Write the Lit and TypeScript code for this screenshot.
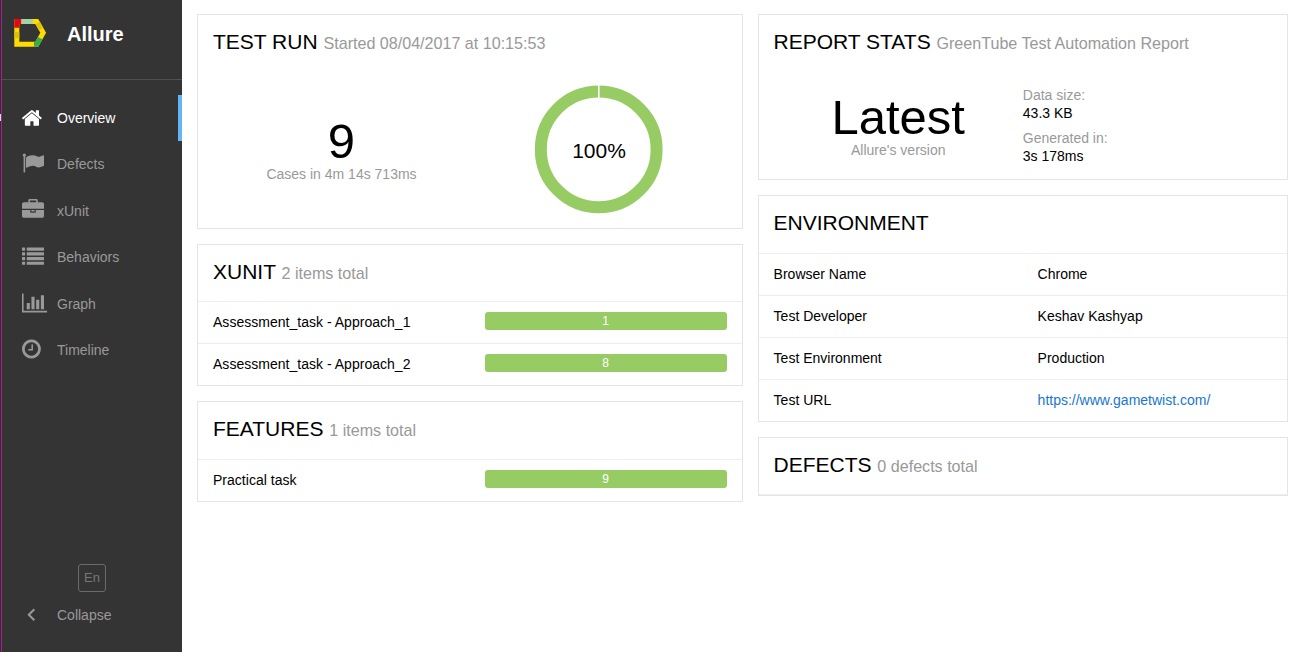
import { LitElement, html, svg, css } from "lit";
import { customElement } from "lit/decorators.js";

const icons: Record<string, { width: number; x: number; path: string }> = {
  home: { width: 1664, x: 88, path: "M1472 992v480q0 26-19 45t-45 19h-384v-384h-256v384h-384q-26 0-45-19t-19-45v-480q0-1 .5-3t.5-3l575-474 575 474q1 2 1 6zm223-69l-62 74q-8 9-21 11h-3q-13 0-21-7l-692-577-692 577q-12 8-24 7-13-2-21-11l-62-74q-8-10-7-23.5t11-21.5l719-599q32-26 76-26t76 26l244 204v-195q0-14 9-23t23-9h192q14 0 23 9t9 23v408l219 182q10 8 11 21.5t-7 23.5z" },
  flag: { width: 1792, x: 0, path: "M320 256q0 72-64 110v1266q0 13-9.5 22.5t-22.5 9.5h-64q-13 0-22.5-9.5t-9.5-22.5v-1266q-64-38-64-110 0-53 37.5-90.5t90.5-37.5 90.5 37.5 37.5 90.5zm1472 64v763q0 25-12.5 38.5t-39.5 27.5q-215 116-369 116-61 0-123.5-22t-108.5-48-115.5-48-142.5-22q-192 0-464 146-17 9-33 9-26 0-45-19t-19-45v-742q0-32 31-55 21-14 79-43 236-120 421-120 107 0 200 29t219 88q38 19 88 19 54 0 117.5-21t110-47 88-47 54.5-21q26 0 45 19t19 45z" },
  briefcase: { width: 1792, x: 0, path: "M640 256h512v-128h-512v128zm1152 640v480q0 66-47 113t-113 47h-1472q-66 0-113-47t-47-113v-480h672v160q0 26 19 45t45 19h320q26 0 45-19t19-45v-160h672zm-768 0v128h-256v-128h256zm768-480v384h-1792v-384q0-66 47-113t113-47h352v-160q0-40 28-68t68-28h576q40 0 68 28t28 68v160h352q66 0 113 47t47 113z" },
  list: { width: 1792, x: 0, path: [128, 512, 896, 1280].map((y) => `M32 ${y}h192q32 0 32 32v192q0 32-32 32h-192q-32 0-32-32v-192q0-32 32-32zM416 ${y}h1344q32 0 32 32v192q0 32-32 32h-1344q-32 0-32-32v-192q0-32 32-32z`).join("") },
  chart: { width: 2048, x: 0, path: "M640 896v512h-256v-512h256zm384-512v1024h-256v-1024h256zm1024 1152v128h-2048v-1536h128v1408h1920zm-640-896v768h-256v-768h256zm384-384v1152h-256v-1152h256z" },
  clock: { width: 1536, x: 128, path: "M1024 544v448q0 14-9 23t-23 9h-320q-14 0-23-9t-9-23v-64q0-14 9-23t23-9h224v-352q0-14 9-23t23-9h64q14 0 23 9t9 23zm416 352q0-148-73-273t-198-198-273-73-273 73-198 198-73 273 73 273 198 198 273 73 273-73 198-198 73-273zm224 0q0 209-103 385.5t-279.5 279.5-385.5 103-385.5-103-279.5-279.5-103-385.5 103-385.5 279.5-279.5 385.5-103 385.5 103 279.5 279.5 103 385.5z" },
};

const menu = [
  ["home", "Overview"],
  ["flag", "Defects"],
  ["briefcase", "xUnit"],
  ["list", "Behaviors"],
  ["chart", "Graph"],
  ["clock", "Timeline"],
];

const environment = [
  ["Browser Name", "Chrome"],
  ["Test Developer", "Keshav Kashyap"],
  ["Test Environment", "Production"],
];

const icon = (name: string) => {
  const i = icons[name];
  return svg`<svg class="icon" width=${(i.width / 1792) * 22} height="22" viewBox="${i.x} 0 ${i.width} 1792" fill="currentColor"><path d=${i.path}></path></svg>`;
};

@customElement("app-root")
export class AppRoot extends LitElement {
  static styles = css`
    :host { display: flex; height: 652px; overflow: hidden; background: #fff; color: #000;
      font: 14px/18px "Liberation Sans", Arial, sans-serif; }
    * { box-sizing: border-box; }
    .edge { width: 2px; flex: none; background: linear-gradient(90deg, #5a1450 50%, #7b3a73 50%); padding-top: 114px; }
    .notch { width: 1px; height: 7px; background: #dcd8d4; }
    .side { width: 180px; flex: none; background: #343434; color: #999; display: flex; flex-direction: column; }
    .brand { height: 80px; border-bottom: 1px solid #505050; display: flex; padding: 18px 0 0 12px; }
    .logo { display: block; width: 33px; height: 30px; }
    .name { margin: 4px 0 0 20px; font-size: 20px; line-height: 24px; font-weight: bold; color: #fff; }
    .menu { padding-top: 15px; flex: 1; }
    .item { height: 46.4px; display: flex; align-items: center; padding-left: 20px; }
    .item:nth-child(2) { padding-bottom: 1px; }
    .item.active { color: #fff; border-right: 4px solid #64b5f6; }
    .slot { width: 35px; flex: none; display: flex; padding-bottom: 1.4px; }
    .icon { display: block; flex: none; }
    .lang { width: 28px; height: 28px; margin-left: 76px; border: 1px solid #6b6b6b; border-radius: 3px;
      color: #777; font-size: 13px; line-height: 26px; text-align: center; }
    .collapse { display: flex; align-items: center; height: 46px; padding-left: 24px; margin-bottom: 14px; }
    .arrow { width: 31px; flex: none; display: flex; }
    .main { flex: 1; display: flex; gap: 15px; align-items: flex-start; padding: 14px 14px 0 15px; }
    .col { display: flex; flex-direction: column; gap: 15px; }
    .left { width: 546px; }
    .right { width: 530px; }
    .card { border: 1px solid #e5e5e5; background: #fff; }
    .run { height: 215px; }
    .stats { height: 166px; }
    .title { height: 57px; padding: 14px 15px 0; font-size: 21px; line-height: 25px; white-space: nowrap; }
    .right .title { padding-left: 14.5px; }
    .short { height: 56px; }
    .sub { font-size: 16.1px; color: #999; }
    .halves { display: flex; }
    .run-count { width: 287px; padding-top: 45px; text-align: center; }
    .big { font-size: 49px; line-height: 49px; }
    .muted { color: #999; }
    .count-label { margin-top: -1px; }
    .donut { width: 128px; height: 128px; margin: 13px 0 0 50px; display: grid; }
    .ring, .percent { grid-area: 1 / 1; }
    .ring { overflow: visible; }
    .percent { place-self: center; padding-top: 3px; font-size: 21px; line-height: 24px; }
    .version { width: 278.5px; padding-top: 21px; text-align: center; }
    .facts { margin: 14px 0 0 -14.7px; }
    .fact { margin-bottom: 7px; }
    .row { height: 42px; border-top: 1px solid #eee; display: flex; padding: 11px 15px 0; }
    .right .row { padding-left: 14.6px; }
    .label { width: 264px; line-height: 19px; flex: none; }
    .task { width: 272px; letter-spacing: 0.02px; }
    .bar { flex: 1; height: 18px; margin-top: -1px; padding-right: 1px; border-radius: 3px; background: #97cc64; color: #fff; font-size: 12px; line-height: 18px; text-align: center; }
    .value { line-height: 19px; }
    .link { color: #1976d2; line-height: 19px; text-decoration: none; }
    .line { height: 1px; background: #eee; }
  `;

  private task(label: string, value: number) {
    return html`<div class="row"><div class="label task">${label}</div><div class="bar">${value}</div></div>`;
  }

  render() {
    return html`
      <div class="edge"><div class="notch"></div></div>
      <aside class="side">
        <div class="brand">
          <svg class="logo" viewBox="0 0 33 30" fill="none" stroke-width="5">
            <path d="M2.8 3.5H22.8L29.2 14.7L22.8 26.2H2.8z" stroke="#ffdc00"></path>
            <path d="M2.8 14V20" stroke="#dfc10a"></path>
            <path d="M7.5 3.5H2.8V9.7" stroke="#e30613"></path>
            <path d="M7.3 3.5H18.8" stroke="#a5d1a2"></path>
            <path d="M23.7 5.1L27.1 11" stroke="#dfc10a"></path>
            <path d="M26.2 20.1L22.8 26.2H20" stroke="#3bab48"></path>
          </svg>
          <div class="name">Allure</div>
        </div>
        <nav class="menu">
          ${menu.map(([name, label], n) => html`<div class="item ${n === 0 ? "active" : ""}"><span class="slot">${icon(name)}</span><span>${label}</span></div>`)}
        </nav>
        <div class="lang">En</div>
        <div class="collapse">
          <span class="arrow"><svg class="icon" width="10" height="14" viewBox="0 0 10 14"><path d="M8.3 1.3L2.8 6.8L8.3 12.3" fill="none" stroke="currentColor" stroke-width="2"></path></svg></span>
          <span>Collapse</span>
        </div>
      </aside>
      <main class="main">
        <div class="col left">
          <section class="card run">
            <div class="title">TEST RUN <span class="sub">Started 08/04/2017 at 10:15:53</span></div>
            <div class="halves">
              <div class="run-count"><div class="big">9</div><div class="muted count-label">Cases in 4m 14s 713ms</div></div>
              <div class="donut">
                <svg class="ring" width="128" height="128" viewBox="0 0 128 128">
                  <circle cx="63.7" cy="64.4" r="57.9" fill="none" stroke="#97cc64" stroke-width="12"></circle>
                  <path d="M63.8 0V13" stroke="#fff" stroke-width="1.6"></path>
                </svg>
                <div class="percent">100%</div>
              </div>
            </div>
          </section>
          <section class="card">
            <div class="title short">XUNIT <span class="sub">2 items total</span></div>
            ${this.task("Assessment_task - Approach_1", 1)}
            ${this.task("Assessment_task - Approach_2", 8)}
          </section>
          <section class="card">
            <div class="title">FEATURES <span class="sub">1 items total</span></div>
            ${this.task("Practical task", 9)}
          </section>
        </div>
        <div class="col right">
          <section class="card stats">
            <div class="title">REPORT STATS <span class="sub">GreenTube Test Automation Report</span></div>
            <div class="halves">
              <div class="version"><div class="big">Latest</div><div class="muted count-label">Allure's version</div></div>
              <div class="facts">
                <div class="fact"><div class="muted">Data size:</div><div>43.3 KB</div></div>
                <div class="fact"><div class="muted">Generated in:</div><div>3s 178ms</div></div>
              </div>
            </div>
          </section>
          <section class="card">
            <div class="title">ENVIRONMENT</div>
            ${environment.map(([key, value]) => html`<div class="row"><div class="label">${key}</div><div class="value">${value}</div></div>`)}
            <div class="row"><div class="label">Test URL</div><a class="link">https://www.gametwist.com/</a></div>
          </section>
          <section class="card">
            <div class="title short">DEFECTS <span class="sub">0 defects total</span></div>
            <div class="line"></div>
          </section>
        </div>
      </main>
    `;
  }
}
